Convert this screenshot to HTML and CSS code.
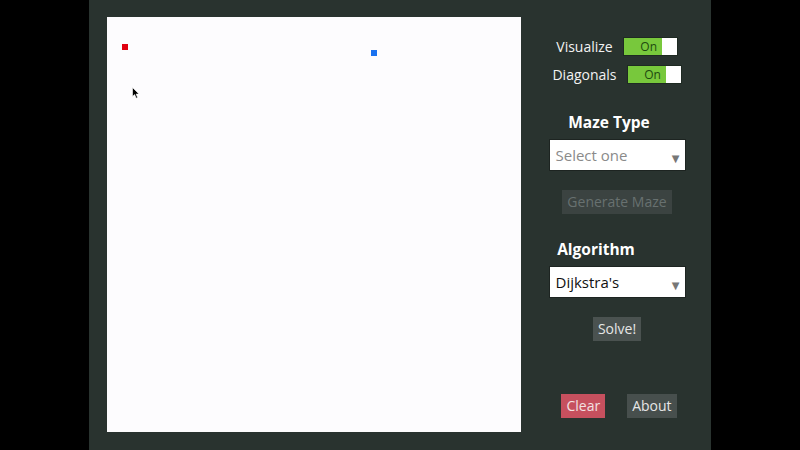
FILE: index.html
```html
<!DOCTYPE html>
<html>
<head>
<meta charset="utf-8">
<link rel="stylesheet" href="styles.css">
</head>
<body>
<div class="app">
  <div class="board">
    <span class="node start"></span>
    <span class="node end"></span>
    <svg class="cursor" width="8" height="12" viewBox="0 0 8 12"><path d="M0.5 0.5 L0.5 9.5 L2.6 7.6 L4.2 11.2 L5.6 10.6 L4.1 7.1 L7 7 Z" fill="#000" stroke="#fff" stroke-width="0.6"/></svg>
  </div>
  <div class="side">
    <div class="toggle-row r1">
      <span class="lbl">Visualize</span>
      <span class="toggle"><span class="on">On</span><span class="off"></span></span>
    </div>
    <div class="toggle-row r2">
      <span class="lbl">Diagonals</span>
      <span class="toggle"><span class="on">On</span><span class="off"></span></span>
    </div>
    <h3 class="heading h-maze">Maze Type</h3>
    <div class="select placeholder"><span>Select one</span><span class="arrow">▼</span></div>
    <button class="btn disabled">Generate Maze</button>
    <h3 class="heading h-algo">Algorithm</h3>
    <div class="select"><span>Dijkstra's</span><span class="arrow">▼</span></div>
    <button class="btn solve">Solve!</button>
    <div class="bottom">
      <button class="btn clear">Clear</button>
      <button class="btn about">About</button>
    </div>
  </div>
</div>
</body>
</html>
```
FILE: styles.css
```css
html, body {
  margin: 0;
  padding: 0;
  background: #000;
  height: 450px;
  overflow: hidden;
}
body {
  font-family: "Open Sans", "DejaVu Sans", sans-serif;
}
.app {
  width: 622px;
  height: 450px;
  margin: 0 auto;
  background: #29332f;
  display: flex;
  box-sizing: border-box;
  padding: 17px 0 0 18px;
}
.board {
  width: 414px;
  height: 415px;
  background: #fdfcfe;
  position: relative;
  flex: none;
}
.node {
  position: absolute;
  width: 6px;
  height: 6px;
}
.start { left: 15px; top: 27px; background: #e00010; }
.end { left: 264px; top: 33px; background: #1a72f0; }
.cursor { position: absolute; left: 25px; top: 70px; }
.side {
  width: 190px;
  padding-left: 2px;
  display: flex;
  flex-direction: column;
  align-items: center;
  color: #f2f2f2;
}
.toggle-row {
  display: flex;
  align-items: center;
  gap: 10px;
  font-size: 14px;
  height: 19px;
}
.r1 { margin-top: 20px; }
.r2 { margin-top: 9px; }
.toggle {
  display: flex;
  width: 55px;
  height: 19px;
  border: 1px solid #1e2a22;
  box-sizing: border-box;
}
.toggle .on {
  flex: 1;
  background: #78c83c;
  color: #1e4a10;
  font-size: 12px;
  line-height: 17px;
  text-align: center;
  padding-left: 12px;
}
.toggle .off {
  width: 15px;
  background: #fff;
}
.heading {
  margin: 0;
  font-size: 15.5px;
  font-weight: 700;
  line-height: 20px;
  color: #fff;
}
.h-maze { margin-top: 28px; padding-right: 16px; }
.h-algo { margin-top: 25px; padding-right: 42px; }
.select {
  width: 137px;
  height: 32px;
  box-sizing: border-box;
  background: #fff;
  border: 1px solid #1d2421;
  display: flex;
  align-items: center;
  justify-content: space-between;
  padding: 0 5px 0 6px;
  font-size: 15px;
  color: #111;
  margin-top: 7px;
}
.placeholder { color: #8a8a8a; }
.arrow {
  font-size: 10px;
  color: #777;
  margin-top: 5px;
}
.btn {
  font-family: inherit;
  border: none;
  font-size: 14px;
  height: 24px;
  line-height: 24px;
  padding: 0 5px;
  color: #e6e6e6;
  background: #4a5250;
}
.disabled {
  margin-top: 19px;
  background: #3b4341;
  color: #687170;
}
.solve { margin-top: 19px; }
.bottom {
  display: flex;
  gap: 22px;
  margin-top: 53px;
  padding-left: 4px;
}
.clear { background: #c6505e; color: #f3e0e2; }
.about { background: #474f4d; }
```
